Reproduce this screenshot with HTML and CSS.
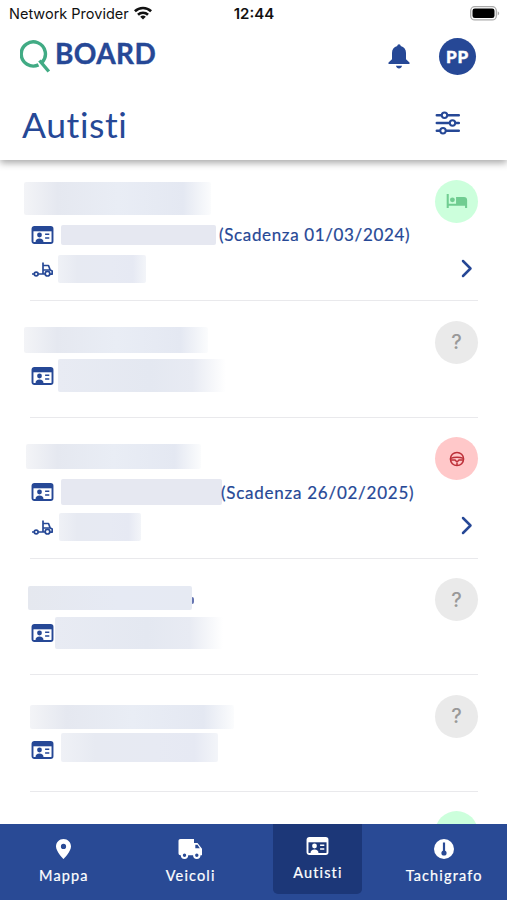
FILE: index.html
```html
<!DOCTYPE html>
<html lang="it">
<head>
<meta charset="utf-8">
<meta name="viewport" content="width=device-width, initial-scale=1">
<title>QBoard – Autisti</title>
<link rel="stylesheet" href="styles.css">
</head>
<body>
<svg class="defs" aria-hidden="true">
  <symbol id="card" viewBox="0 0 22 18">
    <rect x="1" y="1" width="20" height="16" rx="1.8" fill="none" stroke="currentColor" stroke-width="1.9"/>
    <path d="M1 1h20v4.300H1z" fill="currentColor"/>
    <circle cx="8" cy="9" r="2.400" fill="currentColor"/>
    <path d="M4 16.500c0-3 1.500-4 4-4s4 1 4 4z" fill="currentColor"/>
    <path d="M13.600 8.300h4.200M13.600 12h4.200" stroke="currentColor" stroke-width="1.600"/>
  </symbol>
  <symbol id="tractor" viewBox="0 0 21 15">
    <g fill="none" stroke="currentColor" stroke-width="1.700" stroke-linejoin="round">
      <circle cx="4.200" cy="12" r="1.900"/><circle cx="15.500" cy="11.700" r="2.300"/>
      <path d="M0 12h2.200M6.200 12h7M11 12V.500M11 3.500h5.500l1.700 4.500 2 1v3.200h-2.200M11 8h7.500"/>
    </g>
  </symbol>
</svg>

<div class="app">
  <header class="header">
    <div class="status">
      <div class="carrier"><span>Network Provider</span>
        <svg class="wifi" viewBox="0 0 18 14"><g fill="none" stroke="#111" stroke-width="2.600"><path d="M.9 5.200a11.700 11.700 0 0 1 16.200 0M4 8.700a7.200 7.200 0 0 1 10 0"/></g><path d="M6.200 10.800a4 4 0 0 1 5.600 0L9 13.600z" fill="#111"/></svg>
      </div>
      <div class="clock">12:44</div>
      <svg class="battery" viewBox="0 0 30 15"><rect x=".7" y=".7" width="25.600" height="13.200" rx="4" fill="#fff" stroke="#aaa" stroke-width="1.300"/><rect x="2.500" y="2.500" width="22" height="9.600" rx="2.300"/><path d="M27.700 5.200c2 .8 2 3.400 0 4.200z" fill="#aaa"/></svg>
    </div>
    <div class="brandbar">
      <div class="brand">
        <svg class="q" viewBox="0 0 31 34"><g fill="none" stroke="#41ab84" stroke-width="3.400"><path d="M18.500 25.900A12.100 12.100 0 1 1 21.800 23.600"/><path d="M19.500 21.500l9.300 11"/></g></svg>
        <span class="wordmark">BOARD</span>
      </div>
      <svg class="bell" viewBox="0 0 22 25"><path d="M11 .3c1 0 1.600.7 1.700 1.700 3.500.8 5.300 3.400 5.300 7v6.300l3.500 3.200v1.400H.5v-1.400L4 15.300V9c0-3.600 1.800-6.200 5.300-7C9.400 1 10 .3 11 .3zM8 21.800h6c-.4 1.800-1.500 2.700-3 2.700s-2.600-.9-3-2.700z" fill="#264896"/></svg>
      <div class="avatar">PP</div>
    </div>
    <div class="titlebar">
      <h1>Autisti</h1>
      <svg class="filter" viewBox="0 0 26 24"><g fill="#fff" stroke="#264896" stroke-width="2.500" stroke-linecap="round"><path d="M1.800 4.300h22M1.800 12h22M1.800 19.700h22"/><g stroke-width="2"><circle cx="9.500" cy="4.300" r="2.700"/><circle cx="17.500" cy="12" r="2.700"/><circle cx="8" cy="19.700" r="2.700"/></g></g></svg>
    </div>
  </header>

  <main class="list">
    <article class="driver tall d1">
      <div class="line name"><i class="mask"></i></div>
      <div class="line licence"><svg class="card"><use href="#card"/></svg><i class="mask"></i><span class="expiry">(Scadenza 01/03/2024)</span></div>
      <div class="line vehicle"><svg class="tractor"><use href="#tractor"/></svg><i class="mask"></i></div>
      <div class="state rest"><svg class="bed" viewBox="0 0 22 16"><path d="M0 0h2.200v10.500H10V3.200h8.500c2 0 3.300 1.300 3.300 3.300V15h-2.200v-2.600H2.200V15H0z" fill="#70cd91"/><circle cx="6.100" cy="6.200" r="2.600" fill="#70cd91"/></svg></div>
      <svg class="chevron" viewBox="0 0 12 19"><path d="M2 2l7.500 7.500L2 17"/></svg>
    </article>
    <article class="driver d2">
      <div class="line name"><i class="mask"></i></div>
      <div class="line licence"><svg class="card"><use href="#card"/></svg><i class="mask"></i></div>
      <div class="state">?</div>
    </article>
    <article class="driver tall d3">
      <div class="line name"><i class="mask"></i></div>
      <div class="line licence"><svg class="card"><use href="#card"/></svg><i class="mask"></i><span class="expiry">(Scadenza 26/02/2025)</span></div>
      <div class="line vehicle"><svg class="tractor"><use href="#tractor"/></svg><i class="mask"></i></div>
      <div class="state drive"><svg class="wheel" viewBox="0 0 16 16"><g fill="none" stroke="#bd3039" stroke-width="1.500"><circle cx="8" cy="8" r="6.600"/><path d="M1.500 7.400C5.500 6 10.500 6 14.500 7.400M1.800 9h4.200l2 2 2-2h4.200M8 10v4.500"/></g></svg></div>
      <svg class="chevron" viewBox="0 0 12 19"><path d="M2 2l7.500 7.500L2 17"/></svg>
    </article>
    <article class="driver d4">
      <div class="line name"><i class="mask"></i><i class="speck"></i></div>
      <div class="line licence"><svg class="card"><use href="#card"/></svg><i class="mask"></i></div>
      <div class="state">?</div>
    </article>
    <article class="driver d5">
      <div class="line name"><i class="mask"></i></div>
      <div class="line licence"><svg class="card"><use href="#card"/></svg><i class="mask"></i></div>
      <div class="state">?</div>
    </article>
    <article class="driver"><div class="state rest"></div></article>
  </main>

  <nav class="tabs">
    <a class="tab"><svg class="pin" viewBox="0 0 15 20"><path fill-rule="evenodd" d="M7.500 0C3.300 0 0 3.300 0 7.400 0 12.500 7.500 20 7.500 20S15 12.500 15 7.400C15 3.300 11.700 0 7.500 0zm0 4.800a2.600 2.600 0 1 1 0 5.200 2.600 2.600 0 0 1 0-5.200z" fill="#fff"/></svg><span>Mappa</span></a>
    <a class="tab"><svg class="truck" viewBox="0 0 25 20"><path d="M2.500 0H16v4h3.500L24 9.700v6.500H2.500c-1.300 0-2-.7-2-2V2c0-1.300.7-2 2-2z" fill="#fff"/><path d="M17.300 5.800h2.200l2.300 3.500h-4.500z" fill="#294a95"/><g fill="#294a95" stroke="#fff" stroke-width="2"><circle cx="6.500" cy="16.300" r="2.700"/><circle cx="18.800" cy="16.300" r="2.700"/></g></svg><span>Veicoli</span></a>
    <a class="tab active"><svg class="card"><use href="#card"/></svg><span>Autisti</span></a>
    <a class="tab tacho"><svg class="gauge" viewBox="0 0 20 20"><circle cx="10" cy="10" r="10" fill="#fff"/><path d="M10 3.500v10" stroke="#294a95" stroke-width="2.200"/><circle cx="10" cy="14" r="2.600" fill="#294a95"/></svg><span>Tachigrafo</span></a>
  </nav>
</div>
</body>
</html>
```
FILE: styles.css
```css
* { box-sizing: border-box; }
body { margin: 0; background: #fff; color: #264896; font-family: Lato, "Liberation Sans", sans-serif; }
svg { display: block; flex: none; }
.defs { display: none; }
.app { width: 507px; height: 900px; display: flex; flex-direction: column; overflow: hidden; }

.header { flex: none; height: 160px; background: #fff; box-shadow: 0 3px 7px rgba(0, 0, 0, .34); z-index: 1; }
.status { height: 28px; padding: 0 7px 0 9px; display: grid; grid-template-columns: 1fr auto 1fr; align-items: center; color: #111; font-family: Inter, sans-serif; font-size: 15px; }
.carrier { display: flex; align-items: center; gap: 5px; margin-top: -1px; font-size: 14.500px; }
.wifi { width: 18px; height: 14px; margin-top: -1px; }
.clock { font-weight: 600; margin: -1px 1px 0 0; }
.battery { width: 30px; height: 15px; justify-self: end; margin-top: -1px; }
.brandbar { height: 56px; padding: 0 31px 0 20px; display: flex; align-items: center; }
.brand { display: flex; align-items: flex-start; flex: 1; gap: 4px; }
.q { width: 31px; height: 34px; }
.wordmark { font-size: 28px; line-height: 28px; font-weight: 700; letter-spacing: .4px; -webkit-text-stroke: .4px #264896; }
.bell { width: 22px; height: 25px; margin-right: 29px; }
.avatar { width: 37px; height: 37px; border-radius: 50%; background: #264896; color: #fff; display: flex; align-items: center; justify-content: center; font-size: 17px; font-weight: 900; letter-spacing: .8px; -webkit-text-stroke: .4px #fff; }
.titlebar { height: 76px; padding: 5px 46px 0 22px; display: flex; align-items: center; justify-content: space-between; }
h1 { margin: 0; font-size: 35.500px; line-height: 44px; font-weight: 400; letter-spacing: .600px; }
.filter { width: 26px; height: 24px; margin-top: -3px; }

.list { flex: 1; min-height: 0; overflow: hidden; padding: 0 29px 0 30px; }
.driver { height: 116.500px; border-bottom: 1.500px solid #e9e9ec; display: grid; grid-template-columns: 1fr 43px; grid-template-rows: 57px 35px 34px; }
.driver.tall { height: 141px; }
.line { grid-column: 1; display: flex; align-items: center; white-space: nowrap; min-width: 0; }
.name { grid-row: 1; align-items: flex-start; }
.licence { grid-row: 2; padding-left: 1px; }
.vehicle { grid-row: 3; padding-left: 2px; }
.card { width: 23px; height: 18px; }
.licence .card { margin-right: -1px; }
.tractor { width: 21px; height: 15px; margin-top: 1px; }
.expiry { font-size: 17px; letter-spacing: .65px; -webkit-text-stroke: .2px #264896; }
.state { grid-column: 2; grid-row: 1 / 3; margin-top: 19.500px; width: 43px; height: 43px; border-radius: 50%; background: #eaeaea; color: #999; display: flex; align-items: center; justify-content: center; font-family: Inter, sans-serif; font-size: 20px; font-weight: 500; }
.rest { background: #ccffdc; }
.drive { background: #ffc8c9; }
.bed { width: 22px; height: 15px; }
.wheel { width: 16px; height: 16px; }
.chevron { grid-column: 2; grid-row: 3; align-self: center; width: 12px; height: 19px; margin: -2px 0 0 26px; fill: none; stroke: #264896; stroke-width: 2.500; stroke-linecap: round; stroke-linejoin: round; }

.mask { flex: none; border-radius: 2px; background: linear-gradient(90deg, #eff1f6, #e7eaf2 22%, #e7eaf3 60%, #e6e9f3 85%, #f3f5f9); }
.name .mask { background: linear-gradient(90deg, #f3f4f7, #e5e8f0 18%, #e9edf5 50%, #e4e8f2 85%, #fbfcfd); }
.d1 .name .mask { width: 187px; height: 33px; margin: 22px 0 0 -6px; }
.d1 .licence .mask { width: 155px; height: 20px; margin: 0 3px 0 8px; background: #e6e8f1; }
.d1 .vehicle .mask { width: 88px; height: 28px; margin-left: 5px; }
.d2 .name .mask { width: 184px; height: 26px; margin: 26px 0 0 -6px; }
.d2 .licence .mask { width: 168px; height: 33px; margin-left: 5px; }
.d3 .name .mask { width: 175px; height: 25px; margin: 26.500px 0 0 -4px; }
.d3 .licence .mask { width: 161px; height: 26px; margin-left: 8px; margin-right: -1px; background: #e6e8f1; }
.d3 .expiry { letter-spacing: .75px; }
.d3 .vehicle .mask { width: 82px; height: 28px; margin-left: 6px; }
.d4 .name .mask { width: 164px; height: 24px; margin: 27px 0 0 -2px; background: linear-gradient(90deg, #e5e8ef, #e6eaf4 55%, #e6eaf3); }
.speck { width: 2px; height: 7px; margin-top: 38px; background: #6675b1; border-radius: 0 4px 4px 0; }
.d4 .licence .mask { width: 168px; height: 32px; margin-left: 2px; }
.d5 .name .mask { width: 204px; height: 24px; margin-top: 30px; }
.d5 .licence .mask { width: 157px; height: 29px; margin: -4px 0 0 8px; }
.d2 .licence .mask, .d4 .licence .mask { background: linear-gradient(90deg, #e8ebf3, #e4e8f1 55%, #e8ebf3 80%, #fff); }

.tabs { flex: none; height: 76px; background: #294a95; color: #fff; display: grid; grid-template-columns: repeat(4, 1fr); justify-items: center; align-items: start; }
.tab { width: 89px; height: 70px; padding-top: 15px; display: flex; flex-direction: column; align-items: center; font-size: 14.500px; line-height: 20px; letter-spacing: 1.150px; -webkit-text-stroke: .2px #fff; }
.tab span { margin: 7px -1px 0 0; }
.active { padding-top: 13px; background: #1c3778; border-radius: 0 0 5px 5px; margin-left: 1px; }
.active span { margin-top: 8px; }
.pin { width: 15px; height: 20px; }
.truck { width: 25px; height: 20px; }
.gauge { width: 20px; height: 20px; }
```
